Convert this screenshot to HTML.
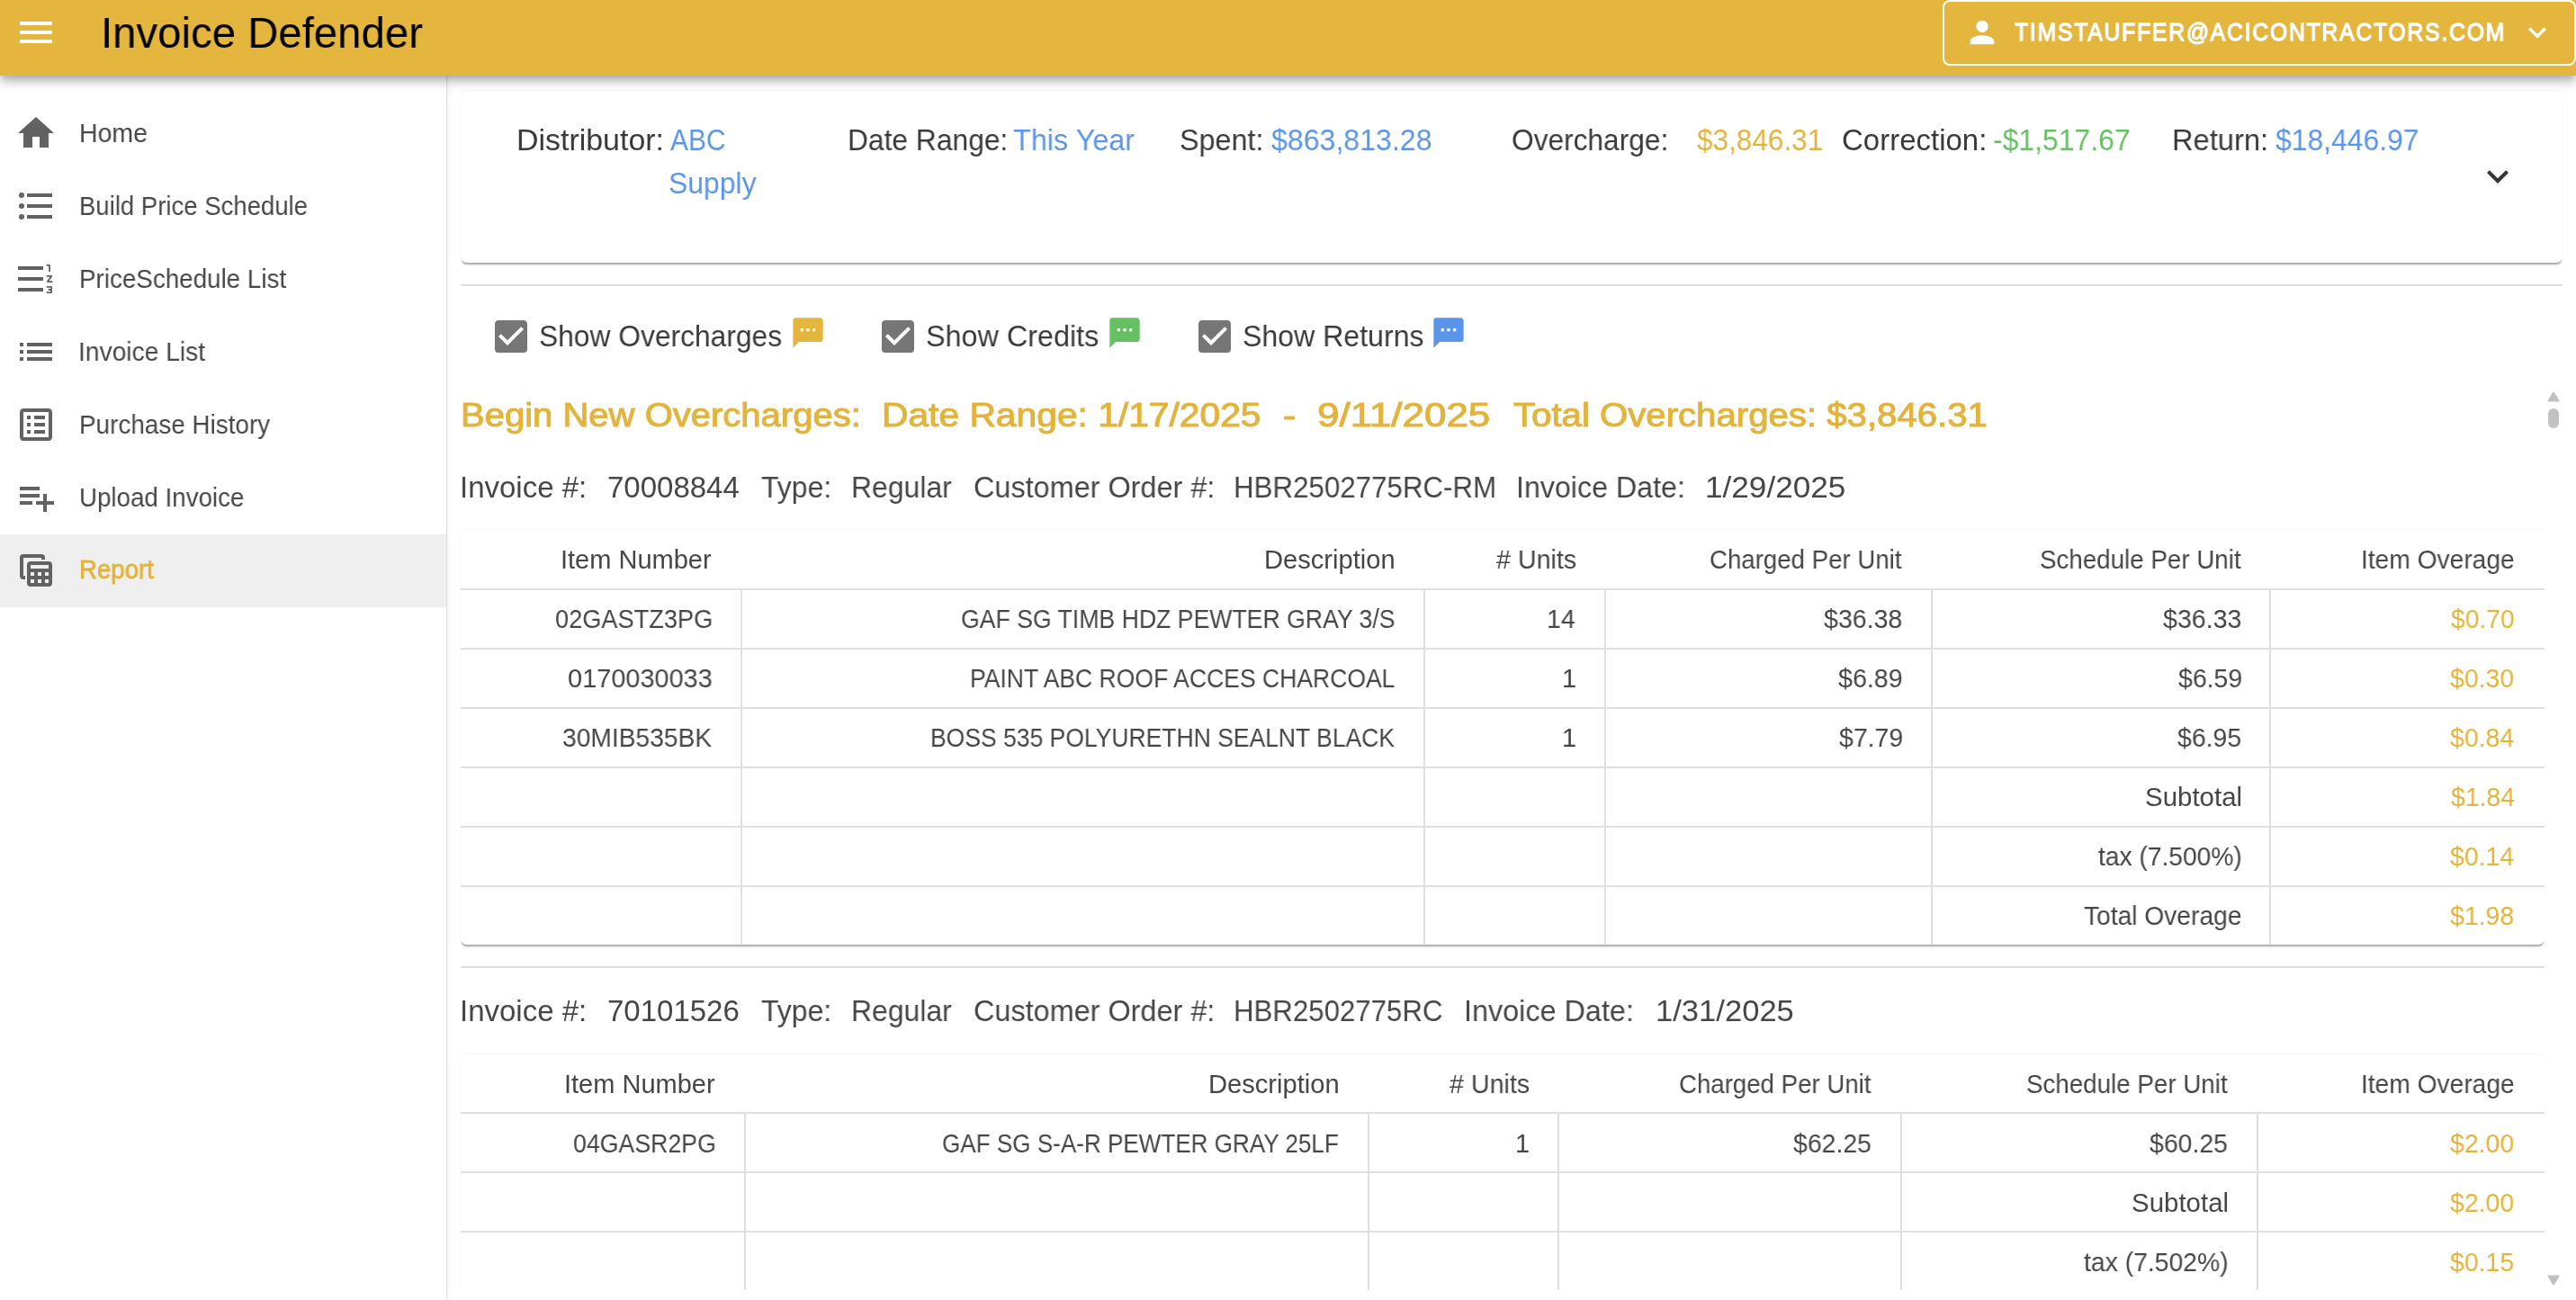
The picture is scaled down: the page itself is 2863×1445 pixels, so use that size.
<!DOCTYPE html>
<html><head><meta charset="utf-8"><title>Invoice Defender</title>
<style>
html,body{margin:0;padding:0;width:2863px;height:1445px;overflow:hidden;background:#fff;font-family:"Liberation Sans",sans-serif;}
.t{position:absolute;white-space:nowrap;transform-origin:0 0;will-change:transform;}
.a{position:absolute;}
svg{position:absolute;display:block;}
.hl{position:absolute;height:2px;background:#dfdfdf;}
.vl{position:absolute;width:2px;background:#dfdfdf;}
.card{position:absolute;background:#fff;border-radius:7px;box-shadow:0 3px 1.5px -1.5px rgba(0,0,0,.28),0 5px 5px -3px rgba(0,0,0,.09),0 1px 3px 0 rgba(0,0,0,.02),0 -1.5px 1.5px -0.5px rgba(0,0,0,.035);}
</style></head><body>

<!-- navigation drawer -->
<div class="a" style="left:0;top:0;width:496px;height:1445px;background:#fff;border-right:1px solid #e0e0e0;"></div>
<div class="a" style="left:497px;top:0;width:5px;height:1445px;background:linear-gradient(to right,rgba(0,0,0,.035),rgba(0,0,0,0));"></div>
<div class="a" style="left:0;top:594px;width:496px;height:81px;background:#efefef;"></div>
<!-- home -->
<svg style="left:16px;top:124px" width="48" height="48" viewBox="0 0 24 24"><path fill="#626262" d="M10,20V14H14V20H19V12H22L12,3L2,12H5V20H10Z"/></svg>
<!-- build price schedule -->
<svg style="left:16px;top:205px" width="48" height="48" viewBox="0 0 24 24"><path fill="#626262" d="M7,5H21V7H7V5M7,13V11H21V13H7M4,4.5A1.5,1.5 0 0,1 5.5,6A1.5,1.5 0 0,1 4,7.5A1.5,1.5 0 0,1 2.5,6A1.5,1.5 0 0,1 4,4.5M4,10.5A1.5,1.5 0 0,1 5.5,12A1.5,1.5 0 0,1 4,13.5A1.5,1.5 0 0,1 2.5,12A1.5,1.5 0 0,1 4,10.5M7,19V17H21V19H7M4,16.5A1.5,1.5 0 0,1 5.5,18A1.5,1.5 0 0,1 4,19.5A1.5,1.5 0 0,1 2.5,18A1.5,1.5 0 0,1 4,16.5Z"/></svg>
<!-- price schedule list -->
<svg style="left:16px;top:286px" width="48" height="48" viewBox="0 0 24 24"><path fill="#626262" d="M2,5H16V7H2ZM2,11H16V13H2ZM2,17H16V19H2Z"/><path fill="none" stroke="#626262" stroke-width="0.9" stroke-linecap="square" stroke-linejoin="bevel" d="M18.3,4.45H19.55V7.6M18.3,10.45H20.75L18.3,13.55H20.75M18.3,16.45H20.6V19.55H18.3M19.3,18H20.6"/></svg>
<!-- invoice list -->
<svg style="left:16px;top:367px" width="48" height="48" viewBox="0 0 24 24"><path fill="#626262" d="M3 13h2v-2H3v2zm0 4h2v-2H3v2zm0-8h2V7H3v2zm4 4h14v-2H7v2zm0 4h14v-2H7v2zM7 7v2h14V7H7z"/></svg>
<!-- purchase history -->
<svg style="left:16px;top:448px" width="48" height="48" viewBox="0 0 24 24"><path fill="#626262" d="M11 15H17V17H11V15M9 7H7V9H9V7M11 13H17V11H11V13M11 9H17V7H11V9M9 11H7V13H9V11M21 5V19C21 20.1 20.1 21 19 21H5C3.9 21 3 20.1 3 19V5C3 3.9 3.9 3 5 3H19C20.1 3 21 3.9 21 5M19 5H5V19H19V5M9 15H7V17H9V15Z"/></svg>
<!-- upload invoice -->
<svg style="left:16px;top:529px" width="48" height="48" viewBox="0 0 24 24"><path fill="#626262" d="M3 16H10V14H3M18 14V10H16V14H12V16H16V20H18V16H22V14M14 6H3V8H14M14 10H3V12H14V10Z"/></svg>
<!-- report -->
<svg style="left:16px;top:610px" width="48" height="48" viewBox="0 0 24 24"><path fill="#626262" d="M17,6V5A2,2 0 0,0 15,3H5A2,2 0 0,0 3,5V15A2,2 0 0,0 5,17H6V15H5V5H15V6Z"/><path fill="#626262" fill-rule="evenodd" d="M9,7H19A2,2 0 0,1 21,9V19A2,2 0 0,1 19,21H9A2,2 0 0,1 7,19V9A2,2 0 0,1 9,7ZM9,9H19V11H9ZM9,13H11V15H9ZM13,13H15V15H13ZM17,13H19V15H17ZM9,17H11V19H9ZM13,17H15V19H13ZM17,17H19V19H17Z"/></svg>

<!-- summary card -->
<div class="card" style="left:512px;top:101px;width:2336px;height:191px;"></div>
<svg style="left:2752px;top:172px" width="48" height="48" viewBox="0 0 24 24"><path fill="#343434" d="M7.41,8.58L12,13.17L16.59,8.58L18,10L12,16L6,10L7.41,8.58Z"/></svg>
<div class="hl" style="left:512px;top:316px;width:2336px;"></div>

<!-- checkboxes -->
<svg style="left:544px;top:350px" width="48" height="48" viewBox="0 0 24 24"><path fill="#767676" d="M10,17L5,12L6.41,10.58L10,14.17L17.59,6.58L19,8M19,3H5C3.89,3 3,3.89 3,5V19A2,2 0 0,0 5,21H19A2,2 0 0,0 21,19V5C21,3.89 20.1,3 19,3Z"/></svg>
<svg style="left:974px;top:350px" width="48" height="48" viewBox="0 0 24 24"><path fill="#767676" d="M10,17L5,12L6.41,10.58L10,14.17L17.59,6.58L19,8M19,3H5C3.89,3 3,3.89 3,5V19A2,2 0 0,0 5,21H19A2,2 0 0,0 21,19V5C21,3.89 20.1,3 19,3Z"/></svg>
<svg style="left:1326px;top:350px" width="48" height="48" viewBox="0 0 24 24"><path fill="#767676" d="M10,17L5,12L6.41,10.58L10,14.17L17.59,6.58L19,8M19,3H5C3.89,3 3,3.89 3,5V19A2,2 0 0,0 5,21H19A2,2 0 0,0 21,19V5C21,3.89 20.1,3 19,3Z"/></svg>
<svg style="left:878px;top:350px" width="40" height="40" viewBox="0 0 24 24"><path fill="#E4B63E" d="M17,11H15V9H17M13,11H11V9H13M9,11H7V9H9M20,2H4A2,2 0 0,0 2,4V22L6,18H20A2,2 0 0,0 22,16V4C22,2.89 21.1,2 20,2Z"/></svg>
<svg style="left:1230px;top:350px" width="40" height="40" viewBox="0 0 24 24"><path fill="#66BF63" d="M17,11H15V9H17M13,11H11V9H13M9,11H7V9H9M20,2H4A2,2 0 0,0 2,4V22L6,18H20A2,2 0 0,0 22,16V4C22,2.89 21.1,2 20,2Z"/></svg>
<svg style="left:1590px;top:350px" width="40" height="40" viewBox="0 0 24 24"><path fill="#5A95E9" d="M17,11H15V9H17M13,11H11V9H13M9,11H7V9H9M20,2H4A2,2 0 0,0 2,4V22L6,18H20A2,2 0 0,0 22,16V4C22,2.89 21.1,2 20,2Z"/></svg>

<!-- table 1 -->
<div class="card" style="left:512px;top:589px;width:2315.5px;height:461px;"></div>
<div class="hl" style="left:512px;top:654px;width:2315.5px;"></div>
<div class="hl" style="left:512px;top:720px;width:2315.5px;"></div>
<div class="hl" style="left:512px;top:786px;width:2315.5px;"></div>
<div class="hl" style="left:512px;top:852px;width:2315.5px;"></div>
<div class="hl" style="left:512px;top:918px;width:2315.5px;"></div>
<div class="hl" style="left:512px;top:984px;width:2315.5px;"></div>
<div class="vl" style="left:823px;top:656px;height:394px;"></div>
<div class="vl" style="left:1581.6px;top:656px;height:394px;"></div>
<div class="vl" style="left:1782.5px;top:656px;height:394px;"></div>
<div class="vl" style="left:2145.6px;top:656px;height:394px;"></div>
<div class="vl" style="left:2522.4px;top:656px;height:394px;"></div>
<div class="hl" style="left:512px;top:1074px;width:2315.5px;"></div>

<!-- table 2 -->
<div class="card" style="left:512px;top:1172px;width:2315.5px;height:400px;"></div>
<div class="hl" style="left:512px;top:1236px;width:2315.5px;"></div>
<div class="hl" style="left:512px;top:1302px;width:2315.5px;"></div>
<div class="hl" style="left:512px;top:1368px;width:2315.5px;"></div>
<div class="vl" style="left:826.6px;top:1238px;height:196px;"></div>
<div class="vl" style="left:1520.1px;top:1238px;height:196px;"></div>
<div class="vl" style="left:1730.7px;top:1238px;height:196px;"></div>
<div class="vl" style="left:2111.7px;top:1238px;height:196px;"></div>
<div class="vl" style="left:2507.7px;top:1238px;height:196px;"></div>
<div class="a" style="left:503px;top:1434px;width:2360px;height:11px;background:#fff;"></div>

<!-- scrollbar -->
<svg style="left:2831px;top:435px" width="14" height="12" viewBox="0 0 14 12"><path fill="#c1c1c1" stroke="#c1c1c1" stroke-width="2" stroke-linejoin="round" d="M7,1.5L12.5,10.5H1.5Z"/></svg>
<div class="a" style="left:2832px;top:454px;width:12px;height:22px;border-radius:6px;background:#c1c1c1;"></div>
<svg style="left:2831px;top:1417px" width="14" height="12" viewBox="0 0 14 12"><path fill="#c1c1c1" stroke="#c1c1c1" stroke-width="2" stroke-linejoin="round" d="M7,10.5L12.5,1.5H1.5Z"/></svg>

<!-- app bar -->
<div class="a" style="left:0;top:0;width:2863px;height:84px;background:#E4B63E;box-shadow:0 4px 8px -2px rgba(0,0,0,.2),0 8px 10px 0 rgba(0,0,0,.14),0 2px 20px 0 rgba(0,0,0,.12);"></div>
<div class="a" style="left:22px;top:24px;width:36px;height:4px;background:#fff;"></div>
<div class="a" style="left:22px;top:34px;width:36px;height:4px;background:#fff;"></div>
<div class="a" style="left:22px;top:44px;width:36px;height:4px;background:#fff;"></div>
<div class="a" style="left:2159px;top:0px;width:700px;height:69px;border:2px solid #fff;border-radius:8px;"></div>
<svg style="left:2183px;top:16px" width="40" height="40" viewBox="0 0 24 24"><path fill="#fff" d="M12,4A4,4 0 0,1 16,8A4,4 0 0,1 12,12A4,4 0 0,1 8,8A4,4 0 0,1 12,4M12,14C16.42,14 20,15.79 20,18V20H4V18C4,15.79 7.58,14 12,14Z"/></svg>
<svg style="left:2800px;top:16px" width="40" height="40" viewBox="0 0 24 24"><path fill="#fff" d="M7.41,8.58L12,13.17L16.59,8.58L18,10L12,16L6,10L7.41,8.58Z"/></svg>

<div class='t' style='left:111.75px;top:13.00px;font-size:48px;line-height:48px;font-weight:400;color:#000;transform:scaleX(0.9863);'>Invoice Defender</div>
<div class='t' style='left:2239.10px;top:22.20px;font-size:28px;line-height:28px;font-weight:400;color:#fff;transform:scaleX(0.8839);-webkit-text-stroke-width:1.3px;letter-spacing:2px'>TIMSTAUFFER@ACICONTRACTORS.COM</div>
<div class='t' style='left:88.04px;top:134.00px;font-size:29px;line-height:29px;font-weight:400;color:#474747;transform:scaleX(0.9824);'>Home</div>
<div class='t' style='left:88.10px;top:215.00px;font-size:29px;line-height:29px;font-weight:400;color:#474747;transform:scaleX(0.9491);'>Build Price Schedule</div>
<div class='t' style='left:88.08px;top:296.00px;font-size:29px;line-height:29px;font-weight:400;color:#474747;transform:scaleX(0.9580);'>PriceSchedule List</div>
<div class='t' style='left:87.08px;top:377.00px;font-size:29px;line-height:29px;font-weight:400;color:#474747;transform:scaleX(0.9725);'>Invoice List</div>
<div class='t' style='left:88.08px;top:458.00px;font-size:29px;line-height:29px;font-weight:400;color:#474747;transform:scaleX(0.9607);'>Purchase History</div>
<div class='t' style='left:88.09px;top:539.00px;font-size:29px;line-height:29px;font-weight:400;color:#474747;transform:scaleX(0.9556);'>Upload Invoice</div>
<div class='t' style='left:88.10px;top:619.00px;font-size:29px;line-height:29px;font-weight:400;color:#E3B33C;transform:scaleX(0.9523);-webkit-text-stroke-width:0.8px'>Report</div>
<div class='t' style='left:573.92px;top:139.00px;font-size:33px;line-height:33px;font-weight:400;color:#3a3a3a;transform:scaleX(1.0279);'>Distributor:</div>
<div class='t' style='left:745.30px;top:139.00px;font-size:33px;line-height:33px;font-weight:400;color:#5A95E9;transform:scaleX(0.9075);'>ABC</div>
<div class='t' style='left:743.37px;top:187.00px;font-size:33px;line-height:33px;font-weight:400;color:#5A95E9;transform:scaleX(0.9667);'>Supply</div>
<div class='t' style='left:942.11px;top:139.00px;font-size:33px;line-height:33px;font-weight:400;color:#3a3a3a;transform:scaleX(0.9626);'>Date Range:</div>
<div class='t' style='left:1126.32px;top:139.00px;font-size:33px;line-height:33px;font-weight:400;color:#5A95E9;transform:scaleX(0.9816);'>This Year</div>
<div class='t' style='left:1310.64px;top:139.00px;font-size:33px;line-height:33px;font-weight:400;color:#3a3a3a;transform:scaleX(0.9791);'>Spent:</div>
<div class='t' style='left:1413.00px;top:139.00px;font-size:33px;line-height:33px;font-weight:400;color:#5A95E9;transform:scaleX(0.9725);'>$863,813.28</div>
<div class='t' style='left:1679.64px;top:139.00px;font-size:33px;line-height:33px;font-weight:400;color:#3a3a3a;transform:scaleX(0.9596);'>Overcharge:</div>
<div class='t' style='left:1886.20px;top:139.00px;font-size:33px;line-height:33px;font-weight:400;color:#E3B33C;transform:scaleX(0.9552);'>$3,846.31</div>
<div class='t' style='left:2046.60px;top:139.00px;font-size:33px;line-height:33px;font-weight:400;color:#3a3a3a;'>Correction:</div>
<div class='t' style='left:2214.83px;top:139.00px;font-size:33px;line-height:33px;font-weight:400;color:#66BF63;transform:scaleX(0.9677);'>-$1,517.67</div>
<div class='t' style='left:2414.03px;top:139.00px;font-size:33px;line-height:33px;font-weight:400;color:#3a3a3a;transform:scaleX(0.9902);'>Return:</div>
<div class='t' style='left:2528.80px;top:139.00px;font-size:33px;line-height:33px;font-weight:400;color:#5A95E9;transform:scaleX(0.9659);'>$18,446.97</div>
<div class='t' style='left:599.38px;top:356.60px;font-size:33px;line-height:33px;font-weight:400;color:#3a3a3a;transform:scaleX(0.9622);'>Show Overcharges</div>
<div class='t' style='left:1029.24px;top:356.60px;font-size:33px;line-height:33px;font-weight:400;color:#3a3a3a;transform:scaleX(0.9798);'>Show Credits</div>
<div class='t' style='left:1380.66px;top:356.60px;font-size:33px;line-height:33px;font-weight:400;color:#3a3a3a;transform:scaleX(0.9721);'>Show Returns</div>
<div class='t' style='left:511.81px;top:444.40px;font-size:36.5px;line-height:36.5px;font-weight:400;color:#E3B33C;transform:scaleX(1.0963);-webkit-text-stroke-width:1px'>Begin New Overcharges:</div>
<div class='t' style='left:979.77px;top:444.40px;font-size:36.5px;line-height:36.5px;font-weight:400;color:#E3B33C;transform:scaleX(1.1168);-webkit-text-stroke-width:1px'>Date Range: 1/17/2025</div>
<div class='t' style='left:1425.84px;top:444.40px;font-size:36.5px;line-height:36.5px;font-weight:400;color:#E3B33C;transform:scaleX(1.1600);-webkit-text-stroke-width:1px'>-</div>
<div class='t' style='left:1463.50px;top:444.40px;font-size:36.5px;line-height:36.5px;font-weight:400;color:#E3B33C;transform:scaleX(1.2044);-webkit-text-stroke-width:1px'>9/11/2025</div>
<div class='t' style='left:1682.00px;top:444.40px;font-size:36.5px;line-height:36.5px;font-weight:400;color:#E3B33C;transform:scaleX(1.1004);-webkit-text-stroke-width:1px'>Total Overcharges: $3,846.31</div>
<div class='t' style='left:511.00px;top:525.00px;font-size:33px;line-height:33px;font-weight:400;color:#464646;'>Invoice #:</div>
<div class='t' style='left:675.00px;top:525.00px;font-size:33px;line-height:33px;font-weight:400;color:#464646;'>70008844</div>
<div class='t' style='left:846.03px;top:525.00px;font-size:33px;line-height:33px;font-weight:400;color:#464646;transform:scaleX(0.9688);'>Type:</div>
<div class='t' style='left:945.50px;top:525.00px;font-size:33px;line-height:33px;font-weight:400;color:#464646;transform:scaleX(0.9670);'>Regular</div>
<div class='t' style='left:1081.84px;top:525.00px;font-size:33px;line-height:33px;font-weight:400;color:#464646;transform:scaleX(0.9821);'>Customer Order #:</div>
<div class='t' style='left:1370.66px;top:525.00px;font-size:33px;line-height:33px;font-weight:400;color:#464646;transform:scaleX(0.9479);'>HBR2502775RC-RM</div>
<div class='t' style='left:1685.07px;top:525.00px;font-size:33px;line-height:33px;font-weight:400;color:#464646;transform:scaleX(0.9754);'>Invoice Date:</div>
<div class='t' style='left:1895.37px;top:525.00px;font-size:33px;line-height:33px;font-weight:400;color:#464646;transform:scaleX(1.0653);'>1/29/2025</div>
<div class='t' style='left:511.00px;top:1106.80px;font-size:33px;line-height:33px;font-weight:400;color:#464646;'>Invoice #:</div>
<div class='t' style='left:675.00px;top:1106.80px;font-size:33px;line-height:33px;font-weight:400;color:#464646;'>70101526</div>
<div class='t' style='left:846.03px;top:1106.80px;font-size:33px;line-height:33px;font-weight:400;color:#464646;transform:scaleX(0.9688);'>Type:</div>
<div class='t' style='left:945.50px;top:1106.80px;font-size:33px;line-height:33px;font-weight:400;color:#464646;transform:scaleX(0.9670);'>Regular</div>
<div class='t' style='left:1081.84px;top:1106.80px;font-size:33px;line-height:33px;font-weight:400;color:#464646;transform:scaleX(0.9821);'>Customer Order #:</div>
<div class='t' style='left:1371.06px;top:1106.80px;font-size:33px;line-height:33px;font-weight:400;color:#464646;transform:scaleX(0.9455);'>HBR2502775RC</div>
<div class='t' style='left:1626.96px;top:1106.80px;font-size:33px;line-height:33px;font-weight:400;color:#464646;transform:scaleX(0.9807);'>Invoice Date:</div>
<div class='t' style='left:1839.70px;top:1106.80px;font-size:33px;line-height:33px;font-weight:400;color:#464646;transform:scaleX(1.0479);'>1/31/2025</div>
<div class='t' style='left:623.30px;top:608.40px;font-size:29px;line-height:29px;font-weight:400;color:#464646;'>Item Number</div>
<div class='t' style='left:1404.99px;top:608.40px;font-size:29px;line-height:29px;font-weight:400;color:#464646;transform:scaleX(1.0035);'>Description</div>
<div class='t' style='left:1662.60px;top:608.40px;font-size:29px;line-height:29px;font-weight:400;color:#464646;transform:scaleX(0.9876);'># Units</div>
<div class='t' style='left:1900.05px;top:608.40px;font-size:29px;line-height:29px;font-weight:400;color:#464646;transform:scaleX(0.9529);'>Charged Per Unit</div>
<div class='t' style='left:2266.64px;top:608.40px;font-size:29px;line-height:29px;font-weight:400;color:#464646;transform:scaleX(0.9567);'>Schedule Per Unit</div>
<div class='t' style='left:2623.99px;top:608.40px;font-size:29px;line-height:29px;font-weight:400;color:#464646;transform:scaleX(0.9715);'>Item Overage</div>
<div class='t' style='left:617.16px;top:674.30px;font-size:29px;line-height:29px;font-weight:400;color:#464646;transform:scaleX(0.9370);'>02GASTZ3PG</div>
<div class='t' style='left:1068.18px;top:674.30px;font-size:29px;line-height:29px;font-weight:400;color:#464646;transform:scaleX(0.9185);'>GAF SG TIMB HDZ PEWTER GRAY 3/S</div>
<div class='t' style='left:1719.14px;top:674.30px;font-size:29px;line-height:29px;font-weight:400;color:#464646;transform:scaleX(0.9800);'>14</div>
<div class='t' style='left:2026.90px;top:674.30px;font-size:29px;line-height:29px;font-weight:400;color:#464646;transform:scaleX(0.9841);'>$36.38</div>
<div class='t' style='left:2403.80px;top:674.30px;font-size:29px;line-height:29px;font-weight:400;color:#464646;transform:scaleX(0.9852);'>$36.33</div>
<div class='t' style='left:2723.90px;top:674.30px;font-size:29px;line-height:29px;font-weight:400;color:#E3B33C;transform:scaleX(0.9736);'>$0.70</div>
<div class='t' style='left:631.10px;top:740.30px;font-size:29px;line-height:29px;font-weight:400;color:#464646;transform:scaleX(0.9962);'>0170030033</div>
<div class='t' style='left:1078.17px;top:740.30px;font-size:29px;line-height:29px;font-weight:400;color:#464646;transform:scaleX(0.9152);'>PAINT ABC ROOF ACCES CHARCOAL</div>
<div class='t' style='left:1735.80px;top:740.30px;font-size:29px;line-height:29px;font-weight:400;color:#464646;transform:scaleX(0.9800);'>1</div>
<div class='t' style='left:2043.40px;top:740.30px;font-size:29px;line-height:29px;font-weight:400;color:#464646;transform:scaleX(0.9873);'>$6.89</div>
<div class='t' style='left:2420.92px;top:740.30px;font-size:29px;line-height:29px;font-weight:400;color:#464646;transform:scaleX(0.9800);'>$6.59</div>
<div class='t' style='left:2723.44px;top:740.30px;font-size:29px;line-height:29px;font-weight:400;color:#E3B33C;transform:scaleX(0.9800);'>$0.30</div>
<div class='t' style='left:625.23px;top:806.30px;font-size:29px;line-height:29px;font-weight:400;color:#464646;transform:scaleX(0.9722);'>30MIB535BK</div>
<div class='t' style='left:1034.07px;top:806.30px;font-size:29px;line-height:29px;font-weight:400;color:#464646;transform:scaleX(0.9139);'>BOSS 535 POLYURETHN SEALNT BLACK</div>
<div class='t' style='left:1735.80px;top:806.30px;font-size:29px;line-height:29px;font-weight:400;color:#464646;transform:scaleX(0.9800);'>1</div>
<div class='t' style='left:2043.92px;top:806.30px;font-size:29px;line-height:29px;font-weight:400;color:#464646;transform:scaleX(0.9800);'>$7.79</div>
<div class='t' style='left:2419.94px;top:806.30px;font-size:29px;line-height:29px;font-weight:400;color:#464646;transform:scaleX(0.9800);'>$6.95</div>
<div class='t' style='left:2723.44px;top:806.30px;font-size:29px;line-height:29px;font-weight:400;color:#E3B33C;transform:scaleX(0.9800);'>$0.84</div>
<div class='t' style='left:2383.88px;top:872.30px;font-size:29px;line-height:29px;font-weight:400;color:#464646;transform:scaleX(1.0154);'>Subtotal</div>
<div class='t' style='left:2723.50px;top:872.30px;font-size:29px;line-height:29px;font-weight:400;color:#E3B33C;transform:scaleX(0.9792);'>$1.84</div>
<div class='t' style='left:2332.10px;top:938.30px;font-size:29px;line-height:29px;font-weight:400;color:#464646;transform:scaleX(0.9718);'>tax (7.500%)</div>
<div class='t' style='left:2723.44px;top:938.30px;font-size:29px;line-height:29px;font-weight:400;color:#E3B33C;transform:scaleX(0.9800);'>$0.14</div>
<div class='t' style='left:2315.60px;top:1004.30px;font-size:29px;line-height:29px;font-weight:400;color:#464646;transform:scaleX(0.9717);'>Total Overage</div>
<div class='t' style='left:2723.44px;top:1004.30px;font-size:29px;line-height:29px;font-weight:400;color:#E3B33C;transform:scaleX(0.9800);'>$1.98</div>
<div class='t' style='left:627.30px;top:1190.90px;font-size:29px;line-height:29px;font-weight:400;color:#464646;'>Item Number</div>
<div class='t' style='left:1342.99px;top:1190.90px;font-size:29px;line-height:29px;font-weight:400;color:#464646;transform:scaleX(1.0035);'>Description</div>
<div class='t' style='left:1610.60px;top:1190.90px;font-size:29px;line-height:29px;font-weight:400;color:#464646;transform:scaleX(0.9876);'># Units</div>
<div class='t' style='left:1866.05px;top:1190.90px;font-size:29px;line-height:29px;font-weight:400;color:#464646;transform:scaleX(0.9529);'>Charged Per Unit</div>
<div class='t' style='left:2251.64px;top:1190.90px;font-size:29px;line-height:29px;font-weight:400;color:#464646;transform:scaleX(0.9567);'>Schedule Per Unit</div>
<div class='t' style='left:2623.99px;top:1190.90px;font-size:29px;line-height:29px;font-weight:400;color:#464646;transform:scaleX(0.9715);'>Item Overage</div>
<div class='t' style='left:637.08px;top:1256.80px;font-size:29px;line-height:29px;font-weight:400;color:#464646;transform:scaleX(0.9206);'>04GASR2PG</div>
<div class='t' style='left:1047.10px;top:1256.80px;font-size:29px;line-height:29px;font-weight:400;color:#464646;transform:scaleX(0.8988);'>GAF SG S-A-R PEWTER GRAY 25LF</div>
<div class='t' style='left:1683.80px;top:1256.80px;font-size:29px;line-height:29px;font-weight:400;color:#464646;transform:scaleX(0.9800);'>1</div>
<div class='t' style='left:1993.26px;top:1256.80px;font-size:29px;line-height:29px;font-weight:400;color:#464646;transform:scaleX(0.9800);'>$62.25</div>
<div class='t' style='left:2389.26px;top:1256.80px;font-size:29px;line-height:29px;font-weight:400;color:#464646;transform:scaleX(0.9800);'>$60.25</div>
<div class='t' style='left:2723.44px;top:1256.80px;font-size:29px;line-height:29px;font-weight:400;color:#E3B33C;transform:scaleX(0.9800);'>$2.00</div>
<div class='t' style='left:2368.88px;top:1322.80px;font-size:29px;line-height:29px;font-weight:400;color:#464646;transform:scaleX(1.0154);'>Subtotal</div>
<div class='t' style='left:2723.44px;top:1322.80px;font-size:29px;line-height:29px;font-weight:400;color:#E3B33C;transform:scaleX(0.9800);'>$2.00</div>
<div class='t' style='left:2316.23px;top:1388.80px;font-size:29px;line-height:29px;font-weight:400;color:#464646;transform:scaleX(0.9771);'>tax (7.502%)</div>
<div class='t' style='left:2723.44px;top:1388.80px;font-size:29px;line-height:29px;font-weight:400;color:#E3B33C;transform:scaleX(0.9800);'>$0.15</div>
<div class='t' style='left:2300.60px;top:1454.80px;font-size:29px;line-height:29px;font-weight:400;color:#464646;transform:scaleX(0.9717);'>Total Overage</div>
<div class='t' style='left:2723.44px;top:1454.80px;font-size:29px;line-height:29px;font-weight:400;color:#E3B33C;transform:scaleX(0.9800);'>$2.15</div>
</body></html>
